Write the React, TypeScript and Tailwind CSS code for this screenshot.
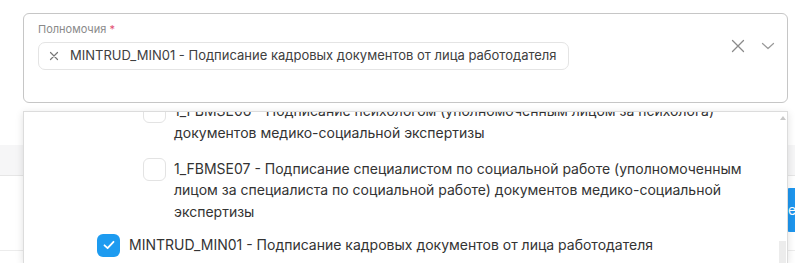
import React from 'react';

const font = { fontFamily: 'Inter, "Noto Sans", sans-serif' };

const Box = ({ checked }: { checked?: boolean }) =>
  checked ? (
    <div className="w-[23px] h-[23px] shrink-0 rounded-[6px] bg-[#1d9bf0] flex items-center justify-center">
      <svg width="14" height="14" viewBox="0 0 14 14" fill="none">
        <path d="M2.5 7.3 L5.6 10.2 L11.5 3.8" stroke="white" strokeWidth="1.8" strokeLinecap="round" strokeLinejoin="round" />
      </svg>
    </div>
  ) : (
    <div className="w-[23px] h-[23px] shrink-0 rounded-[6px] border border-[#e3e3e3] bg-white" />
  );

const App = () => {
  return (
    <div className="relative w-[795px] h-[263px] overflow-hidden bg-white text-[#333]" style={font}>
      {/* page content behind the dropdown */}
      <div className="absolute left-0 right-0 top-[145px] h-[31px] bg-[#f6f6f7] border-b border-[#e6e6e6]" />
      <div className="absolute left-0 right-0 top-[250px] border-b border-[#ececec]" />
      <div className="absolute left-[786px] top-[188px] h-[44px] w-[40px] bg-[#1e96ee] rounded-l-[4px] text-white text-[14px] leading-[44px] pl-[2px]">
        ес
      </div>

      {/* select box */}
      <div className="relative ml-[23px] mt-[13px] w-[765px] h-[90px] border border-[#c6c6c6] rounded-[6px] bg-white px-[14px] pt-[8px]">
        <div className="text-[11px] leading-[14px] text-[#8a8a8a]">
          Полномочия <span className="text-[#e2506f]">*</span>
        </div>
        <div className="mt-[6px] inline-flex items-center h-[28px] border border-[#e4e4e4] rounded-[7px] pl-[10px] pr-[11px] gap-[11px]">
          <svg width="10" height="10" viewBox="0 0 10 10">
            <path d="M1.5 1.5 L8.5 8.5 M8.5 1.5 L1.5 8.5" stroke="#777" strokeWidth="1.2" strokeLinecap="round" />
          </svg>
          <span className="text-[13px] text-[#404040]">MINTRUD_MIN01 - Подписание кадровых документов от лица работодателя</span>
        </div>
        <div className="absolute right-[12px] top-[25px] flex items-center gap-[16px]">
          <svg width="14" height="14" viewBox="0 0 14 14">
            <path d="M1.5 1.5 L12.5 12.5 M12.5 1.5 L1.5 12.5" stroke="#8a8a8a" strokeWidth="1.3" strokeLinecap="round" />
          </svg>
          <svg width="14" height="14" viewBox="0 0 14 14">
            <path d="M1.5 4.5 L7 9.5 L12.5 4.5" stroke="#9a9a9a" strokeWidth="1.2" fill="none" strokeLinecap="round" strokeLinejoin="round" />
          </svg>
        </div>
      </div>

      {/* dropdown list */}
      <div className="absolute left-[23px] top-[111px] w-[765px] bottom-0 overflow-hidden bg-white border-l border-t border-r border-[#dcdcdc] shadow-[0_2px_8px_rgba(0,0,0,0.12)] text-[14px] leading-[21.5px] text-[#333]">
        <div className="mt-[-12px] flex flex-col">
          <div className="flex gap-[8px] pl-[119px]">
            <Box />
            <div>
              1_FBMSE06 - Подписание психологом (уполномоченным лицом за психолога)
              <br />
              документов медико-социальной экспертизы
            </div>
          </div>
          <div className="flex gap-[8px] pl-[119px] mt-[14.5px]">
            <Box />
            <div>
              1_FBMSE07 - Подписание специалистом по социальной работе (уполномоченным
              <br />
              лицом за специалиста по социальной работе) документов медико-социальной
              <br />
              экспертизы
            </div>
          </div>
          <div className="flex gap-[9px] pl-[73px] mt-[11.5px]">
            <Box checked />
            <div>MINTRUD_MIN01 - Подписание кадровых документов от лица работодателя</div>
          </div>
        </div>
        {/* scrollbar */}
        <div className="absolute right-[1px] top-[4px] w-0 h-0 border-l-[3px] border-r-[3px] border-b-[4px] border-l-transparent border-r-transparent border-b-[#c8c8c8]" />
        <div className="absolute right-[1px] top-[129px] bottom-0 w-[7px] bg-[#ececec]" />
      </div>
    </div>
  );
};

export default App;
